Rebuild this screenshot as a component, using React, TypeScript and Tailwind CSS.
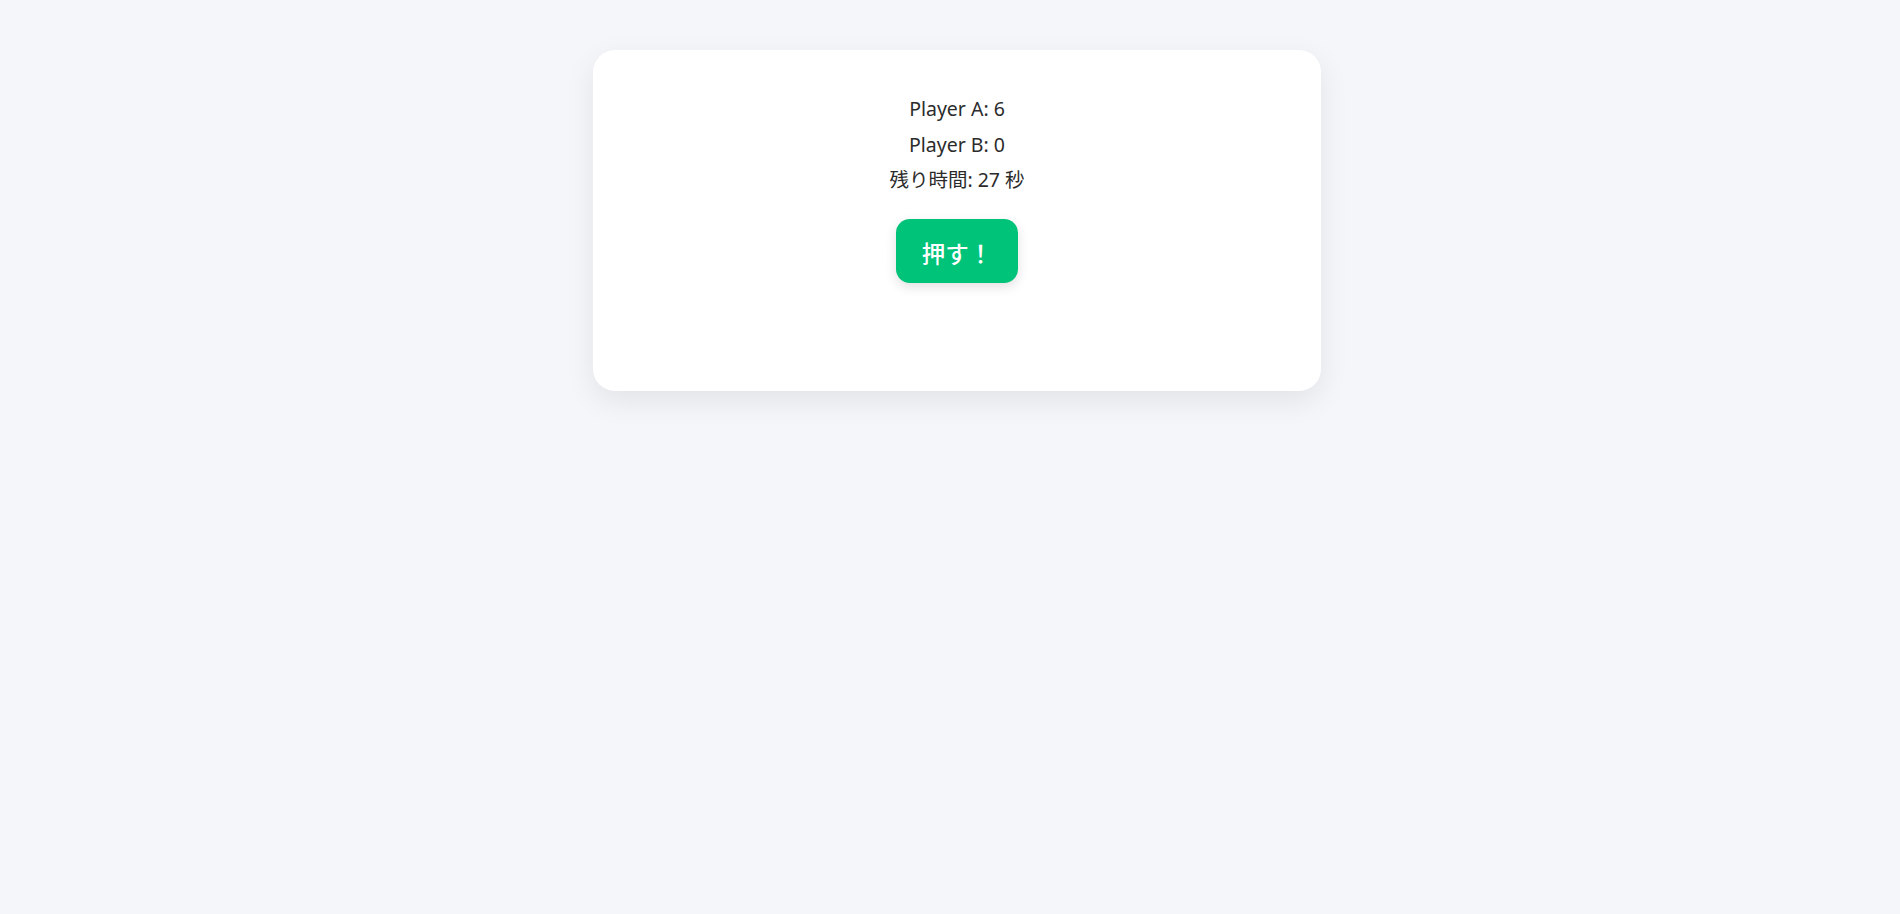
export default function App() {
  const scoreA = 6;
  const scoreB = 0;
  const timeLeft = 27;

  return (
    <div
      className="min-h-[914px] bg-[#f5f6fa] flex justify-center items-start pl-[14px] pt-[50px]"
      style={{ fontFamily: '"Noto Sans", "Noto Sans CJK JP", sans-serif' }}
    >
      <div className="w-[728px] h-[341px] bg-white rounded-[22px] shadow-[0_10px_30px_rgba(0,0,0,0.08)] flex flex-col items-center pt-[41px]">
        <p className="text-[19.5px] leading-[36px] text-[#2b2b2b]">Player A: {scoreA}</p>
        <p className="text-[19.5px] leading-[35px] text-[#2b2b2b]">Player B: {scoreB}</p>
        <p className="text-[19.5px] leading-[35px] text-[#2b2b2b]">残り時間: {timeLeft} 秒</p>
        <button className="mt-[22px] w-[122px] h-[64px] pt-[7px] rounded-[14px] bg-[#00c37a] text-white text-[23.5px] font-medium shadow-[0_4px_12px_rgba(0,0,0,0.12)] cursor-pointer">
          押す！
        </button>
      </div>
    </div>
  );
}
